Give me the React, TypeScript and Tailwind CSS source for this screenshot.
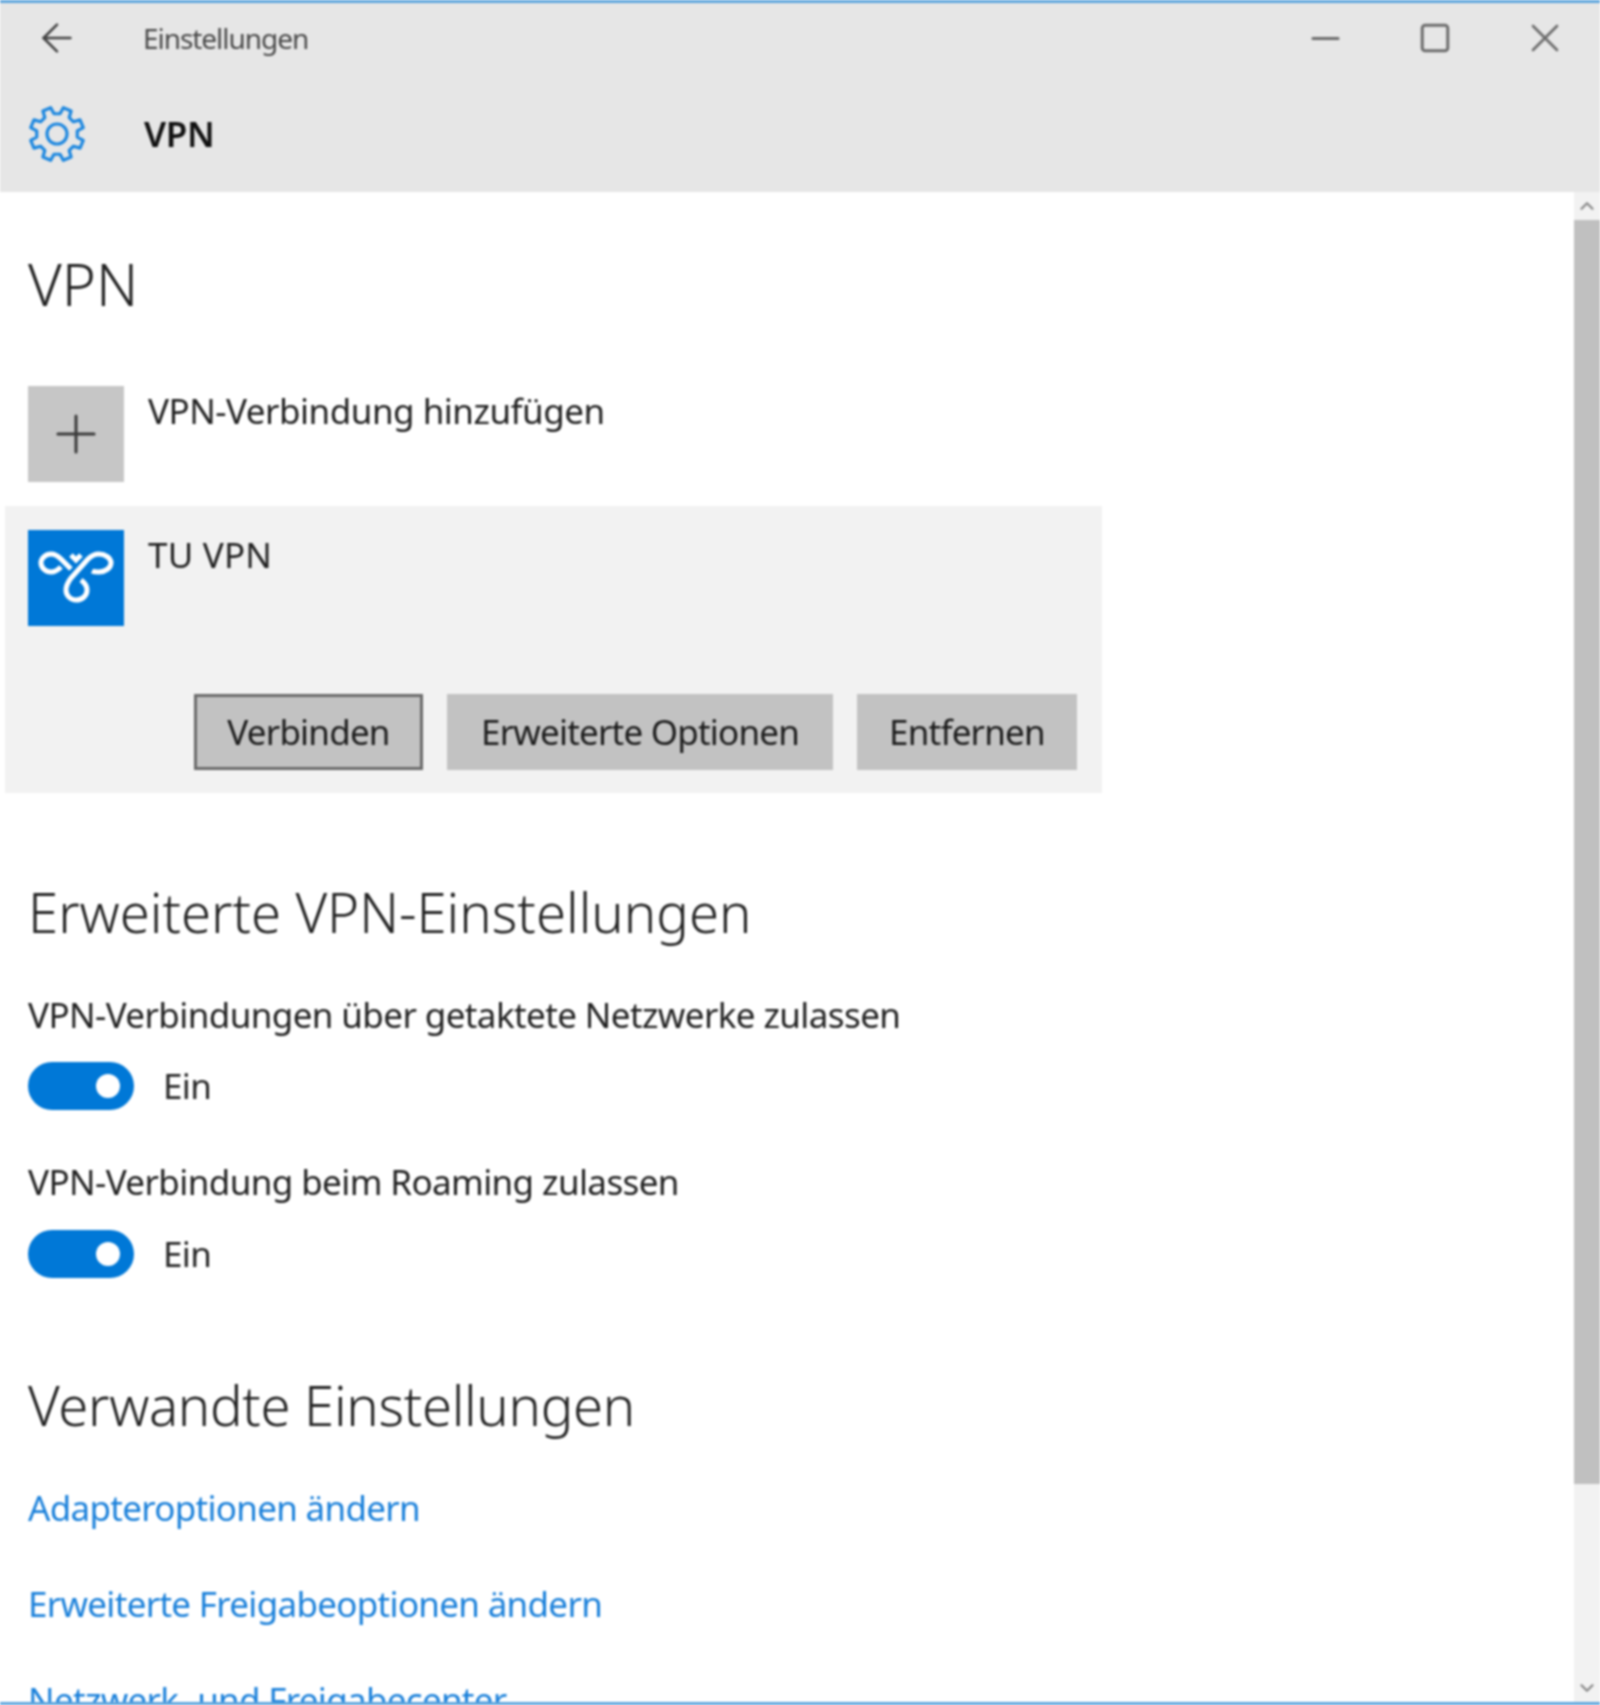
import { ArrowLeft, ChevronDown, ChevronUp, Minus, Plus, Square, X } from "lucide-react";

const font = "font-['Noto_Sans','Open_Sans',sans-serif]";
const bodyText = "text-[35px] leading-[50px] tracking-[-0.6px]";
const subtitle = "pl-[28px] text-[54.5px] leading-[70px] font-light text-[#222]";

function gearPath() {
  const point = (r: number, deg: number) => {
    const a = (deg * Math.PI) / 180;
    return `${(30 + r * Math.sin(a)).toFixed(2)} ${(30 - r * Math.cos(a)).toFixed(2)}`;
  };
  const parts: string[] = [];
  for (let k = 0; k < 8; k++) {
    const t = 22.5 + 45 * k;
    parts.push(point(20.5, t - 14), point(27, t - 9), point(27, t + 9), point(20.5, t + 14));
  }
  return `M${parts.join("L")}Z`;
}

function Gear() {
  return (
    <svg viewBox="0 0 60 60" className="size-[60px] text-[#1e88e0]" fill="none" stroke="currentColor" strokeWidth="3.2" strokeLinejoin="round" aria-hidden="true">
      <path d={gearPath()} />
      <circle cx="30" cy="30" r="10" />
    </svg>
  );
}

function VpnGlyph() {
  return (
    <svg viewBox="0 0 96 96" className="size-[96px]" fill="none" stroke="white" strokeWidth="5" aria-hidden="true">
      <path d="M43 39 L33 29 C30 26 27 24 23 24 C18 24 13 28 13 33 C13 38 18 42 23 42 C27 42 30 40 33 37" />
      <path d="M64 41 C66 42 68 42 71 42 C77 42 83 38 83 33 C83 28 77 24 71 24 C67 24 63 26 60 29 L43 48 C40 52 38 55 38 60 C38 66 43 70 48 70 C54 70 59 66 59 60 C59 56 57 53 53 50" />
      <path d="M43 25 L48 30 L53 25" />
    </svg>
  );
}

function Toggle() {
  return (
    <div className="flex items-center gap-[29px]">
      <span className="flex h-[48px] w-[106px] items-center justify-end rounded-full bg-[#0078d7] pr-[14px]">
        <span className="size-[24px] rounded-full bg-white" />
      </span>
      <span className="text-[35px] leading-[48px] tracking-[-0.6px] text-[#262626]">Ein</span>
    </div>
  );
}

function ActionButton({ label, focused, className }: { label: string; focused?: boolean; className: string }) {
  return (
    <button className={`flex h-[76px] items-center justify-center bg-[#c2c2c2] text-[35px] tracking-[-0.8px] text-[#1c1c1c] ${focused ? "border-[3px] border-[#6b6b6b]" : ""} ${className}`}>
      {label}
    </button>
  );
}

export default function App() {
  return (
    <div className={`flex h-[1705px] flex-col overflow-hidden border-y-[3px] border-[#5ea5dd] bg-white blur-[1px] ${font}`}>
      <header className="h-[189px] shrink-0 bg-[#e6e6e6]">
        <div className="flex h-[70px] items-center text-[#4a4a4a]">
          <span className="flex w-[143px] justify-center pr-[30px]"><ArrowLeft size={46} strokeWidth={2.6} absoluteStrokeWidth className="text-[#444]" /></span>
          <span className="text-[28px] tracking-[-1.05px]">Einstellungen</span>
          <div className="ml-auto flex items-center text-[#6c6c6c]">
            <span className="flex w-[110px] justify-center"><Minus size={43} strokeWidth={3} absoluteStrokeWidth /></span>
            <span className="flex w-[110px] justify-center"><Square size={34} strokeWidth={3} absoluteStrokeWidth /></span>
            <span className="flex w-[110px] justify-center"><X size={48} strokeWidth={2.6} absoluteStrokeWidth /></span>
          </div>
        </div>
        <div className="mt-[15px] flex h-[92px] items-center">
          <span className="flex w-[144px] pl-[27px]"><Gear /></span>
          <span className="text-[35px] font-semibold tracking-[-0.3px] text-[#111]">VPN</span>
        </div>
      </header>

      <div className="flex min-h-0 flex-1">
        <main className="min-w-0 flex-1 overflow-hidden pt-[52px]">
          <h1 className="pl-[28px] text-[58px] leading-[80px] font-light text-[#222]">VPN</h1>

          <div className="mt-[62px] flex gap-[24px] pl-[28px]">
            <span className="flex size-[96px] items-center justify-center bg-[#c6c6c6]"><Plus size={62} strokeWidth={3} absoluteStrokeWidth className="text-[#3a3a3a]" /></span>
            <p className="text-[35px] leading-[50px] tracking-[-0.5px] text-[#222]">VPN-Verbindung hinzufügen</p>
          </div>

          <section className="mt-[24px] ml-[5px] h-[287px] w-[1097px] bg-[#f2f2f2] pt-[24px] pl-[23px]">
            <div className="flex gap-[24px]">
              <span className="size-[96px] bg-[#0078d7]"><VpnGlyph /></span>
              <p className="text-[35px] leading-[50px] tracking-[0.2px] text-[#222]">TU VPN</p>
            </div>
            <div className="mt-[68px] flex gap-[24px] pl-[166px]">
              <ActionButton label="Verbinden" focused className="w-[229px]" />
              <ActionButton label="Erweiterte Optionen" className="w-[386px]" />
              <ActionButton label="Entfernen" className="w-[220px]" />
            </div>
          </section>

          <h2 className={`mt-[84px] ${subtitle}`}>Erweiterte VPN-Einstellungen</h2>

          <div className="mt-[43px] pl-[28px] text-[#222]">
            <p className={bodyText}>VPN-Verbindungen über getaktete Netzwerke zulassen</p>
            <div className="mt-[22px]"><Toggle /></div>
            <p className={`mt-[47px] ${bodyText}`}>VPN-Verbindung beim Roaming zulassen</p>
            <div className="mt-[23px]"><Toggle /></div>
          </div>

          <h2 className={`mt-[92px] tracking-[-0.33px] ${subtitle}`}>Verwandte Einstellungen</h2>

          <div className="mt-[43px] flex flex-col gap-[46px] pl-[28px] text-[35px] leading-[50px] tracking-[-0.7px] text-[#1a80da]">
            <a>Adapteroptionen ändern</a>
            <a>Erweiterte Freigabeoptionen ändern</a>
            <a>Netzwerk- und Freigabecenter</a>
          </div>
        </main>

        <aside className="flex w-[26px] shrink-0 flex-col bg-[#f2f2f2] text-[#8a8a8a]">
          <span className="flex h-[28px] items-center justify-center"><ChevronUp size={22} strokeWidth={2.5} /></span>
          <span className="h-[1264px] bg-[#c0c0c0]" />
          <span className="mt-auto flex h-[28px] items-center justify-center"><ChevronDown size={22} strokeWidth={2.5} /></span>
        </aside>
      </div>
    </div>
  );
}
